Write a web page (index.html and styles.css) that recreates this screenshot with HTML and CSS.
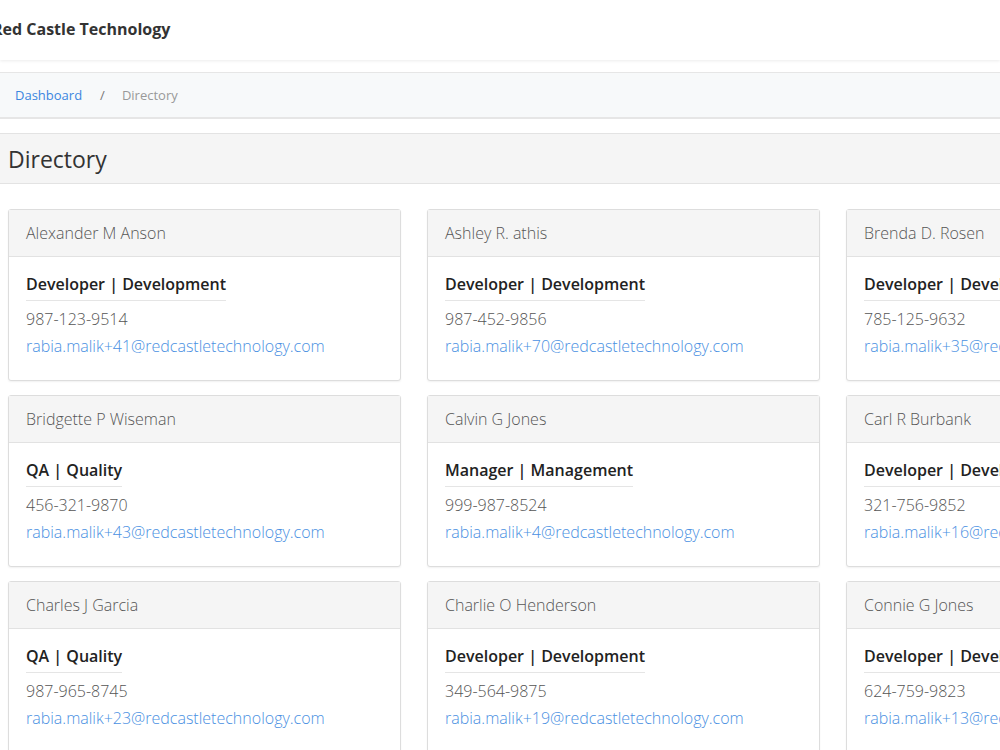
FILE: index.html
```html
<!DOCTYPE html>
<html lang="en">

<head>
  <meta charset="UTF-8">
  <meta name="viewport" content="width=device-width, initial-scale=1.0">
  <title>Directory - Red Castle Technology</title>
  <link rel="stylesheet" href="styles.css">
</head>

<body>
  <header class="topbar">
    <span class="brand">Red Castle Technology</span>
  </header>

  <nav class="crumbs">
    <a href="#" class="crumb-link">Dashboard</a>
    <span class="crumb-sep">/</span>
    <span class="crumb-current">Directory</span>
  </nav>

  <div class="page-title">
    <h1>Directory</h1>
  </div>

  <div class="directory">
    <div class="card">
      <div class="card-head">Alexander M Anson</div>
      <div class="card-body">
        <div class="role">Developer | Development</div>
        <div class="phone">987-123-9514</div>
        <a href="#" class="email">rabia.malik+41@redcastletechnology.com</a>
      </div>
    </div>
    <div class="card">
      <div class="card-head">Ashley R. athis</div>
      <div class="card-body">
        <div class="role">Developer | Development</div>
        <div class="phone">987-452-9856</div>
        <a href="#" class="email">rabia.malik+70@redcastletechnology.com</a>
      </div>
    </div>
    <div class="card">
      <div class="card-head">Brenda D. Rosen</div>
      <div class="card-body">
        <div class="role">Developer | Development</div>
        <div class="phone">785-125-9632</div>
        <a href="#" class="email">rabia.malik+35@redcastletechnology.com</a>
      </div>
    </div>

    <div class="card">
      <div class="card-head">Bridgette P Wiseman</div>
      <div class="card-body">
        <div class="role">QA | Quality</div>
        <div class="phone">456-321-9870</div>
        <a href="#" class="email">rabia.malik+43@redcastletechnology.com</a>
      </div>
    </div>
    <div class="card">
      <div class="card-head">Calvin G Jones</div>
      <div class="card-body">
        <div class="role">Manager | Management</div>
        <div class="phone">999-987-8524</div>
        <a href="#" class="email">rabia.malik+4@redcastletechnology.com</a>
      </div>
    </div>
    <div class="card">
      <div class="card-head">Carl R Burbank</div>
      <div class="card-body">
        <div class="role">Developer | Development</div>
        <div class="phone">321-756-9852</div>
        <a href="#" class="email">rabia.malik+16@redcastletechnology.com</a>
      </div>
    </div>

    <div class="card">
      <div class="card-head">Charles J Garcia</div>
      <div class="card-body">
        <div class="role">QA | Quality</div>
        <div class="phone">987-965-8745</div>
        <a href="#" class="email">rabia.malik+23@redcastletechnology.com</a>
      </div>
    </div>
    <div class="card">
      <div class="card-head">Charlie O Henderson</div>
      <div class="card-body">
        <div class="role">Developer | Development</div>
        <div class="phone">349-564-9875</div>
        <a href="#" class="email">rabia.malik+19@redcastletechnology.com</a>
      </div>
    </div>
    <div class="card">
      <div class="card-head">Connie G Jones</div>
      <div class="card-body">
        <div class="role">Developer | Development</div>
        <div class="phone">624-759-9823</div>
        <a href="#" class="email">rabia.malik+13@redcastletechnology.com</a>
      </div>
    </div>
  </div>
</body>

</html>
```

FILE: styles.css
```css
body {
  margin: 0;
  font-family: "Open Sans", "Noto Sans", sans-serif;
  color: #555;
  background: #fff;
  overflow-x: hidden;
}

.topbar {
  height: 60px;
  display: flex;
  align-items: center;
  background: #fff;
  box-shadow: 0 1px 3px rgba(0, 0, 0, 0.08);
}

.brand {
  margin-left: -8px;
  margin-top: -2px;
  font-size: 16px;
  font-weight: 700;
  color: #333;
}

.crumbs {
  margin-top: 12px;
  height: 44px;
  display: flex;
  align-items: center;
  padding-left: 15px;
  font-size: 13px;
  background: #f7f9fa;
  border-top: 1px solid #e6e6e6;
  border-bottom: 2px solid #e6e6e6;
}

.crumb-link {
  color: #3b86e0;
  text-decoration: none;
}

.crumb-sep {
  color: #777;
  margin: 0 17px 0 18px;
}

.crumb-current {
  color: #999;
}

.page-title {
  margin-top: 14px;
  height: 49px;
  display: flex;
  align-items: center;
  padding-left: 8px;
  background: #f5f5f5;
  border-top: 1px solid #e3e3e3;
  border-bottom: 1px solid #e3e3e3;
}

.page-title h1 {
  margin: 0;
  font-size: 23px;
  font-weight: 500;
  color: #333;
}

.directory {
  display: grid;
  grid-template-columns: repeat(3, 393px);
  column-gap: 26px;
  row-gap: 14px;
  margin: 25px 0 0 8px;
}

.card {
  border: 1px solid #ddd;
  border-radius: 3px;
  box-shadow: 0 1px 2px rgba(0, 0, 0, 0.06);
  background: #fff;
}

.card-head {
  height: 46px;
  display: flex;
  align-items: center;
  padding: 0 17px;
  background: #f5f5f5;
  border-bottom: 1px solid #e2e2e2;
  font-size: 16px;
  font-weight: 300;
  color: #555;
}

.card-body {
  padding: 15px 17px 20px;
  display: flex;
  flex-direction: column;
  align-items: flex-start;
}

.role {
  font-size: 16px;
  font-weight: 600;
  line-height: 24px;
  color: #222;
  padding-bottom: 4px;
  border-bottom: 1px solid #e5e5e5;
  margin-bottom: 5px;
}

.phone {
  font-size: 16px;
  font-weight: 300;
  line-height: 27px;
  color: #555;
}

.email {
  font-size: 16px;
  font-weight: 300;
  line-height: 27px;
  color: #4a90e2;
  text-decoration: none;
}
```
